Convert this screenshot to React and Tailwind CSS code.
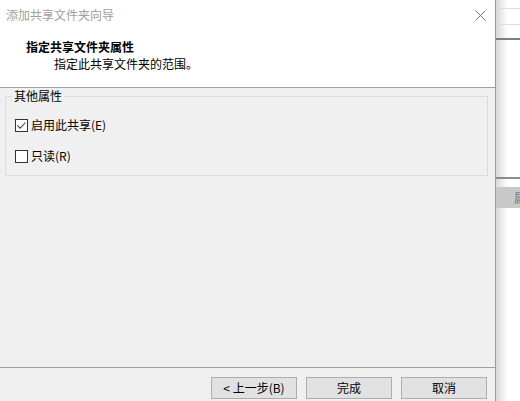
const font = { fontFamily: '"Noto Sans CJK SC", "Liberation Sans", sans-serif' };

function CheckBox({ checked, label }) {
  return (
    <div className="flex items-center h-4 pl-[9px]">
      <span className="w-[13px] h-[13px] border border-[#333] bg-white flex items-center justify-center">
        {checked && (
          <svg width="11" height="11" viewBox="0 0 11 11">
            <path d="M1.5 5.5 L4.2 8.2 L9.5 2.5" fill="none" stroke="#444" strokeWidth="1.1" />
          </svg>
        )}
      </span>
      <span className="ml-[3px] text-[12px] leading-4 text-black">{label}</span>
    </div>
  );
}

function Button({ children }) {
  return (
    <button className="w-[86px] h-[22px] border border-[#adadad] bg-[#e1e1e1] text-[12px] leading-4 text-black">
      {children}
    </button>
  );
}

export default function App() {
  return (
    <div className="w-[520px] h-[401px] flex overflow-hidden bg-white" style={font}>
      {/* wizard dialog */}
      <div className="w-[496px] h-full flex flex-col border-r border-[#9a9a9a]">
        <div className="h-[30px] bg-white flex items-center justify-between pl-[6px] pr-[9px]">
          <span className="text-[12px] leading-4 text-[#a0a0a0]">添加共享文件夹向导</span>
          <svg width="11" height="11" viewBox="0 0 11 11">
            <path d="M0.5 0.5 L10.5 10.5 M10.5 0.5 L0.5 10.5" stroke="#777" strokeWidth="1" />
          </svg>
        </div>

        <div className="h-[58px] bg-white border-b border-[#a0a0a0] pl-[26px] pt-[9px]">
          <div className="text-[12px] leading-4 font-bold text-black">指定共享文件夹属性</div>
          <div className="text-[12px] leading-4 text-black pl-[28px] mt-[1px]">指定此共享文件夹的范围。</div>
        </div>

        <div className="flex-1 bg-[#f0f0f0] px-[5px] pr-[7px]">
          <fieldset className="border border-[#dcdcdc] pb-[11px]">
            <legend className="ml-[6px] px-[2px] text-[12px] leading-4 text-black">其他属性</legend>
            <div className="mt-[13px]">
              <CheckBox checked label="启用此共享(E)" />
            </div>
            <div className="mt-[15px]">
              <CheckBox label="只读(R)" />
            </div>
          </fieldset>
        </div>

        <div className="h-[34px] bg-[#f0f0f0] border-t border-[#a0a0a0] flex justify-end gap-[9px] pr-[8px] pt-[9px]">
          <Button>&lt; 上一步(B)</Button>
          <Button>完成</Button>
          <Button>取消</Button>
        </div>
      </div>

      {/* window behind */}
      <div className="flex-1 h-full flex flex-col bg-gradient-to-r from-[#d8d8d8] via-white to-white">
        <div className="h-[8px]" />
        <div className="h-px bg-[#dcdcdc]" />
        <div className="h-[15px]" />
        <div className="h-px bg-[#dcdcdc]" />
        <div className="h-[13px]" />
        <div className="h-[2px] bg-[#7a8088]" />
        <div className="h-[137px]" />
        <div className="h-[2px] bg-[#8a8e94]" />
        <div className="h-[8px]" />
        <div className="h-[21px] bg-[#c8c8c8] flex items-center justify-end overflow-hidden">
          <span className="text-[12px] leading-4 text-[#777] -mr-[6px]">属</span>
        </div>
      </div>
    </div>
  );
}
